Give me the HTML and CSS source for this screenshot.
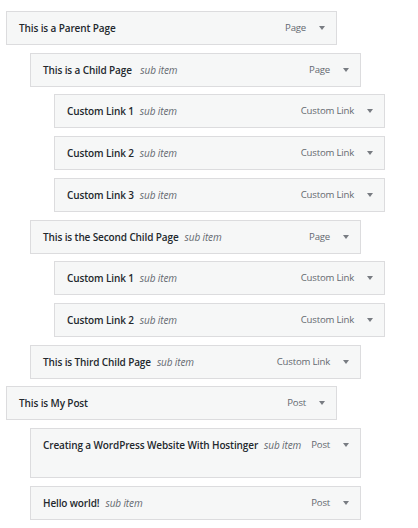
FILE: index.html
```html
<!DOCTYPE html>
<html>
<head>
<meta charset="utf-8">
<link rel="stylesheet" href="styles.css">
</head>
<body>
<ul class="menu">
  <li class="item d0"><span class="title">This is a Parent Page</span><span class="type">Page</span><span class="arrow"></span></li>
  <li class="item d1"><span class="title">This is a Child Page&nbsp;<em class="sub">sub item</em></span><span class="type">Page</span><span class="arrow"></span></li>
  <li class="item d2"><span class="title">Custom Link 1<em class="sub">sub item</em></span><span class="type">Custom Link</span><span class="arrow"></span></li>
  <li class="item d2"><span class="title">Custom Link 2<em class="sub">sub item</em></span><span class="type">Custom Link</span><span class="arrow"></span></li>
  <li class="item d2"><span class="title">Custom Link 3<em class="sub">sub item</em></span><span class="type">Custom Link</span><span class="arrow"></span></li>
  <li class="item d1"><span class="title">This is the Second Child Page<em class="sub">sub item</em></span><span class="type">Page</span><span class="arrow"></span></li>
  <li class="item d2"><span class="title">Custom Link 1<em class="sub">sub item</em></span><span class="type">Custom Link</span><span class="arrow"></span></li>
  <li class="item d2"><span class="title">Custom Link 2<em class="sub">sub item</em></span><span class="type">Custom Link</span><span class="arrow"></span></li>
  <li class="item d1"><span class="title">This is Third Child Page<em class="sub">sub item</em></span><span class="type">Custom Link</span><span class="arrow"></span></li>
  <li class="item d0"><span class="title">This is My Post</span><span class="type">Post</span><span class="arrow"></span></li>
  <li class="item d1 tall"><span class="title">Creating a WordPress Website With Hostinger<em class="sub">sub item</em></span><span class="type">Post</span><span class="arrow"></span></li>
  <li class="item d1"><span class="title">Hello world!<em class="sub">sub item</em></span><span class="type">Post</span><span class="arrow"></span></li>
</ul>
</body>
</html>
```
FILE: styles.css
```css
html, body {
  margin: 0;
  padding: 0;
  background: #ffffff;
}
body {
  font-family: "Open Sans", "Noto Sans", sans-serif;
  font-size: 10px;
  color: #1d2327;
}
.menu {
  list-style: none;
  margin: 0;
  padding: 11px 0 0 6px;
  display: flex;
  flex-direction: column;
  gap: 7.73px;
}
.item {
  box-sizing: border-box;
  width: 331px;
  height: 34px;
  border: 1px solid #dcdcde;
  background: #f6f7f7;
  display: flex;
  align-items: flex-start;
  padding: 8px 10px 0 12px;
  line-height: 16px;
}
.item.tall {
  height: 50px;
}
.d1 { margin-left: 24px; }
.d2 { margin-left: 48px; }
.title {
  font-weight: 600;
  flex: 1;
  white-space: nowrap;
  letter-spacing: -0.12px;
  color: #23282d;
}
.sub {
  font-weight: 400;
  font-style: italic;
  color: #646970;
  margin-left: 6px;
  letter-spacing: -0.12px;
}
.type {
  color: #646970;
  margin-left: 6px;
  font-size: 9.6px;
  letter-spacing: -0.2px;
}
.arrow {
  width: 0;
  height: 0;
  border-left: 3px solid transparent;
  border-right: 3px solid transparent;
  border-top: 4px solid #787c82;
  margin: 6px 1px 0 13px;
}
```
